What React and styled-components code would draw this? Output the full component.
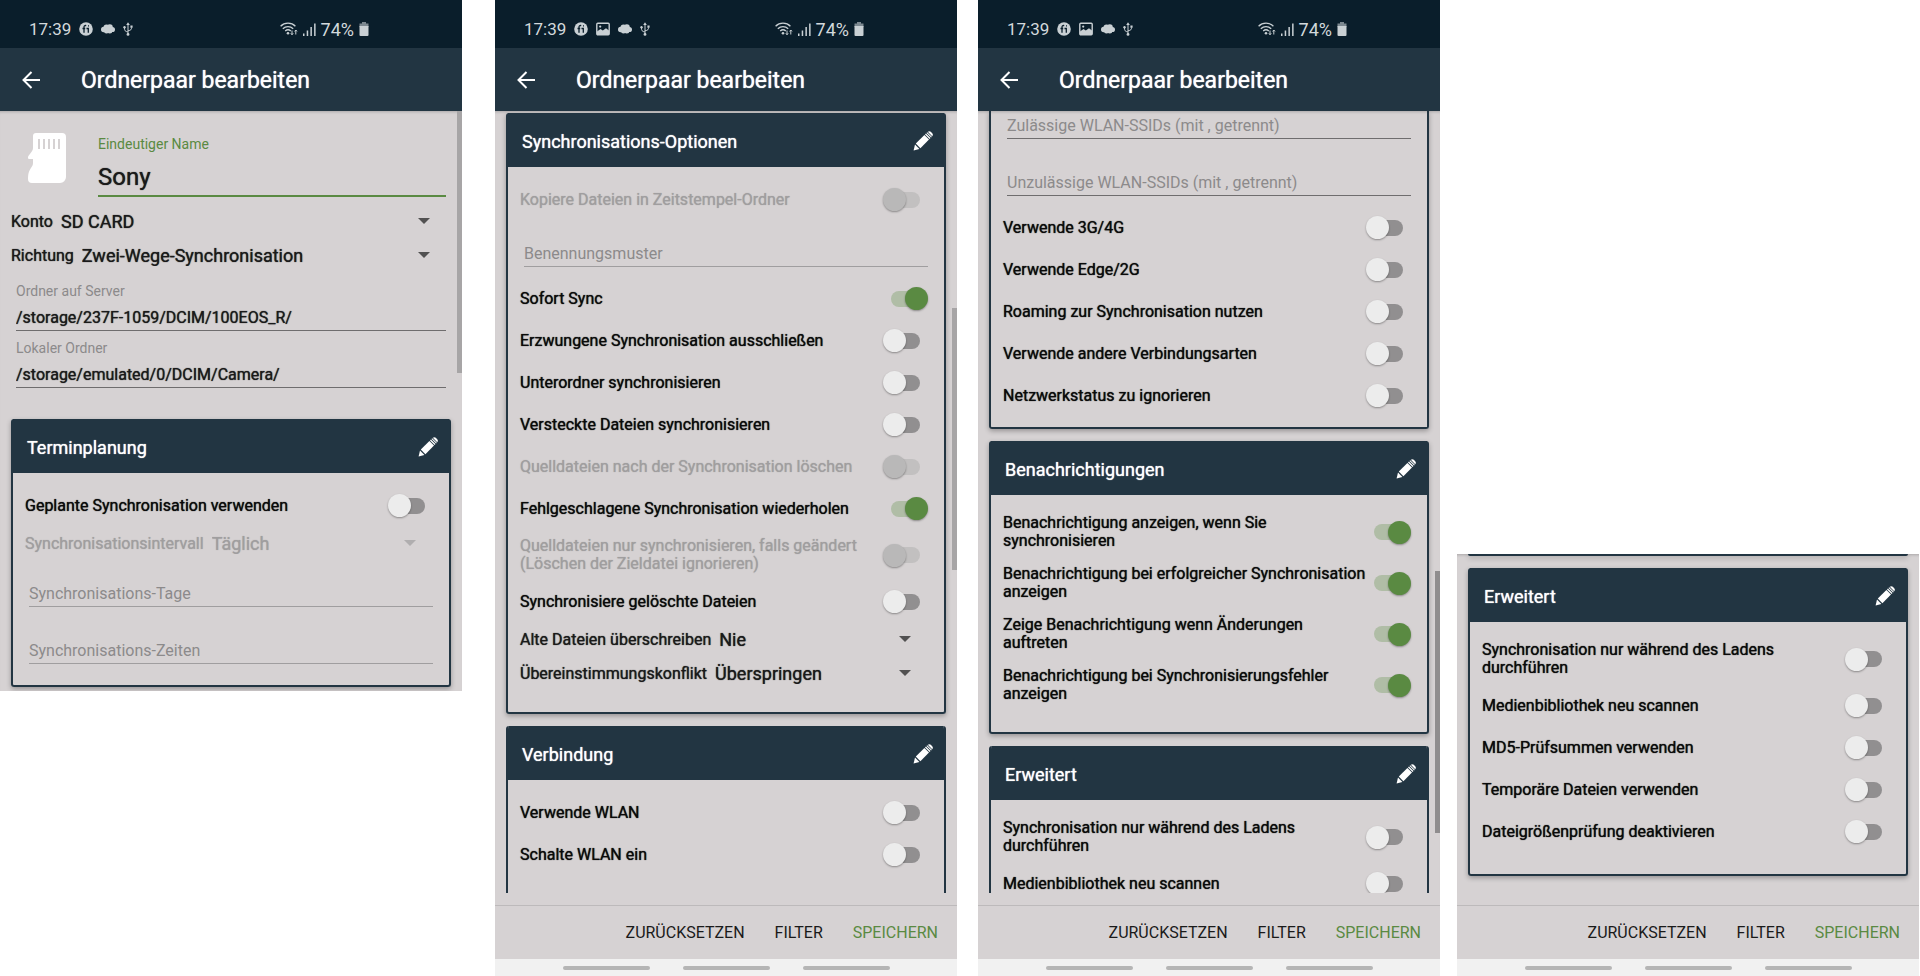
import React, { useId } from 'react';
//Styling
import styled, { createGlobalStyle, css } from 'styled-components';

//Icons
const ArrowIcon = () => (
  <svg width='18' height='18' viewBox='0 0 18 18' fill='none' stroke='#fff' strokeWidth='2'>
    <path d='M18 9H1.5M9.5 1 1.5 9l8 8' />
  </svg>
);

const PencilIcon = () => (
  <svg width='20' height='20' viewBox='0 0 20 20' fill='#fff'>
    <path d='M.6 19.4 2 13.6l4.4 4.4z' />
    <path d='M2.8 12.6 11.4 4 16 8.600 7.400 17.200z' />
    <path d='m12 3.400.9-.9 4.600 4.600-.9.9zM13.500 1.900l.7-.7 4.600 4.600-.7.7z' />
    <path d='M14.800.8c.9-.9 2.100-.9 3 0l1.400 1.400c.9.900.9 2.100 0 3z' />
  </svg>
);

const SdCardIcon = () => (
  <svg width='40' height='50' viewBox='0 0 40 50'>
    <path
      fill='#fff'
      d='M9 0h26a4 4 0 0 1 4 4v40a6 6 0 0 1-6 6H5a4 4 0 0 1-4-4c0-6 1-8 3-11 1-1.500 2-3 2-5v-4H2c-1 0-1-1-1-1.500C1 22 6 19 6 15V3a3 3 0 0 1 3-3z'
    />
    <path stroke='#d6d2d3' strokeWidth='2' d='M12 6v10M17 6v10M22 6v10M27 6v10M32 6v10' />
  </svg>
);

const FiIcon = () => (
  <svg width='14' height='14' viewBox='0 0 14 14'>
    <circle cx='7' cy='7' r='6.800' fill='#c9d0d4' />
    <path
      fill='none'
      stroke='#0a1e2b'
      strokeWidth='1.300'
      d='M5 10.800V5.200c0-1.300.9-2 2.200-1.600M3.500 6.500h2.700M7.500 6.500h1.800v4.300M9 3.800h1'
    />
  </svg>
);

const PictureIcon = () => (
  <svg width='14' height='14' viewBox='0 0 14 14'>
    <rect x='.8' y='1.300' width='12.400' height='11.400' rx='1' fill='none' stroke='#c9d0d4' strokeWidth='1.400' />
    <path fill='#c9d0d4' d='M1 12V9.500L4.500 7l2.300 1.600L10 6.200l3 2.300V12z' />
    <circle cx='4.200' cy='4.600' r='1.100' fill='#c9d0d4' />
  </svg>
);

const CloudIcon = () => (
  <svg width='14' height='14' viewBox='0 0 14 14' fill='#c9d0d4'>
    <circle cx='2.700' cy='7.500' r='2.700' />
    <circle cx='5.500' cy='5.400' r='3' />
    <circle cx='8.800' cy='5.200' r='3' />
    <circle cx='11.400' cy='7.500' r='2.600' />
    <circle cx='5.500' cy='9' r='2.500' />
    <circle cx='8.800' cy='9' r='2.500' />
  </svg>
);

const UsbIcon = () => (
  <svg width='10' height='14' viewBox='0 0 10 14' fill='none' stroke='#c9d0d4'>
    <path d='M5 12V2M5 10C2 9.500 1.500 8.500 1.500 6M5 8.800c3-.5 3.500-1.300 3.500-3.300' />
    <path fill='#c9d0d4' stroke='none' d='M5 .3 6.800 3H3.200zM7.400 3.600h2.200v2.200H7.400z' />
    <circle cx='1.500' cy='5.200' r='1.200' fill='#c9d0d4' stroke='none' />
    <circle cx='5' cy='12.400' r='1.400' fill='#c9d0d4' stroke='none' />
  </svg>
);

const WifiIcon = () => (
  <svg width='18' height='14' viewBox='0 0 18 14' fill='none' stroke='#c9d0d4' strokeWidth='1.300'>
    <path d='M.6 4.200c4-4 10.800-4 14.800 0M2.800 6.700c3-2.900 7.400-2.900 10.400 0M5.200 9c1.700-1.500 3.900-1.500 5.600 0' />
    <circle cx='8' cy='11.200' r='1.300' fill='#c9d0d4' stroke='none' />
    <path strokeWidth='1' d='M12 8.500v4.300M10.800 11.300l1.200 1.400 1.200-1.400M15.800 12.500V8M14.600 9.400l1.200-1.400L17 9.400' />
  </svg>
);

const SignalIcon = () => (
  <svg width='13' height='13' viewBox='0 0 13 13' fill='#c9d0d4'>
    <path d='M0 10.500h1.500V13H0zM3.700 7.500h1.500V13H3.700zM7.400 4h1.500v9H7.400zM11.100.5h1.500V13h-1.500z' />
  </svg>
);

const BatteryIcon = () => (
  <svg width='10' height='14' viewBox='0 0 10 14'>
    <path fill='#7c8890' d='M3 0h4v1.500h2.500V5H.5V1.500H3z' />
    <path fill='#c9d0d4' d='M.5 4h9v9a1 1 0 0 1-1 1h-7a1 1 0 0 1-1-1z' />
  </svg>
);

//Parts
const TopBars = ({ picture }) => (
  <header>
    <StatusBar>
      <StatusGroup>
        <Clock>17:39</Clock>
        <FiIcon />
        {picture && <PictureIcon />}
        <CloudIcon />
        <UsbIcon />
      </StatusGroup>
      <SystemGroup>
        <WifiIcon />
        <SignalIcon />
        <span>74%</span>
        <BatteryIcon />
      </SystemGroup>
    </StatusBar>
    <AppBar>
      <IconButton aria-label='Zurück'>
        <ArrowIcon />
      </IconButton>
      <Title>Ordnerpaar bearbeiten</Title>
    </AppBar>
  </header>
);

const BottomBars = () => (
  <footer>
    <Actions>
      <ActionButton>ZURÜCKSETZEN</ActionButton>
      <ActionButton>FILTER</ActionButton>
      <ActionButton $primary>SPEICHERN</ActionButton>
    </Actions>
    <NavBar>
      <NavHandle />
      <NavHandle />
      <NavHandle />
    </NavBar>
  </footer>
);

const Section = ({ title, roomy, cut, children }) => (
  <Card $cut={cut}>
    <CardHeader>
      <CardTitle>{title}</CardTitle>
      <IconButton aria-label={`${title} bearbeiten`}>
        <PencilIcon />
      </IconButton>
    </CardHeader>
    <CardBody $roomy={roomy}>{children}</CardBody>
  </Card>
);

const Toggle = ({ label, on, disabled }) => (
  <ToggleRow $disabled={disabled}>
    <ToggleText>{label}</ToggleText>
    <Switch type='checkbox' role='switch' defaultChecked={on} disabled={disabled} />
  </ToggleRow>
);

const Choice = ({ label, value, disabled }) => {
  const id = useId();
  return (
    <ChoiceRow $disabled={disabled}>
      <label htmlFor={id}>{label}</label>
      <Select id={id} disabled={disabled}>
        <option>{value}</option>
      </Select>
      <Caret />
    </ChoiceRow>
  );
};

const HintField = ({ label, first, disabled }) => (
  <HintInput placeholder={label} aria-label={label} $first={first} disabled={disabled} />
);

const PathField = ({ label, value }) => (
  <PathLabel>
    {label}
    <PathInput defaultValue={value} />
  </PathLabel>
);

const App = () => {
  return (
    <>
      <GlobalStyle />
      <Gallery>
        <Screen>
          <TopBars />
          <Content>
            <NameRow>
              <SdCardIcon />
              <NameLabel>
                Eindeutiger Name
                <NameInput defaultValue='Sony' />
              </NameLabel>
            </NameRow>
            <Choices>
              <Choice label='Konto' value='SD CARD' />
              <Choice label='Richtung' value='Zwei-Wege-Synchronisation' />
            </Choices>
            <Paths>
              <PathField label='Ordner auf Server' value='/storage/237F-1059/DCIM/100EOS_R/' />
              <PathField label='Lokaler Ordner' value='/storage/emulated/0/DCIM/Camera/' />
            </Paths>
            <Cards $pad='31px 11px 4px'>
              <Section title='Terminplanung'>
                <Toggle label='Geplante Synchronisation verwenden' />
                <Choice label='Synchronisationsintervall' value='Täglich' disabled />
                <HintField label='Synchronisations-Tage' disabled />
                <HintField label='Synchronisations-Zeiten' disabled />
              </Section>
            </Cards>
            <ScrollThumb $top='0' />
          </Content>
        </Screen>

        <Screen $gap='33px' $full>
          <TopBars picture />
          <Content>
            <Cards $pad='2px 11px 0'>
              <Section title='Synchronisations-Optionen' roomy>
                <Toggle label='Kopiere Dateien in Zeitstempel-Ordner' disabled />
                <HintField label='Benennungsmuster' disabled />
                <Toggle label='Sofort Sync' on />
                <Toggle label='Erzwungene Synchronisation ausschließen' />
                <Toggle label='Unterordner synchronisieren' />
                <Toggle label='Versteckte Dateien synchronisieren' />
                <Toggle label='Quelldateien nach der Synchronisation löschen' disabled />
                <Toggle label='Fehlgeschlagene Synchronisation wiederholen' on />
                <Toggle
                  label='Quelldateien nur synchronisieren, falls geändert (Löschen der Zieldatei ignorieren)'
                  disabled
                />
                <Toggle label='Synchronisiere gelöschte Dateien' />
                <Choice label='Alte Dateien überschreiben' value='Nie' />
                <Choice label='Übereinstimmungskonflikt' value='Überspringen' />
              </Section>
              <Section title='Verbindung' cut>
                <Toggle label='Verwende WLAN' />
                <Toggle label='Schalte WLAN ein' />
              </Section>
            </Cards>
            <ScrollThumb $top='197px' />
          </Content>
          <BottomBars />
        </Screen>

        <Screen $gap='21px' $full>
          <TopBars picture />
          <Content>
            <Cards $pad='0 11px'>
              <OpenCard>
                <HintField label='Zulässige WLAN-SSIDs (mit , getrennt)' first />
                <HintField label='Unzulässige WLAN-SSIDs (mit , getrennt)' />
                <Toggle label='Verwende 3G/4G' />
                <Toggle label='Verwende Edge/2G' />
                <Toggle label='Roaming zur Synchronisation nutzen' />
                <Toggle label='Verwende andere Verbindungsarten' />
                <Toggle label='Netzwerkstatus zu ignorieren' />
              </OpenCard>
              <Section title='Benachrichtigungen' roomy>
                <Toggle label='Benachrichtigung anzeigen, wenn Sie synchronisieren' on />
                <Toggle label='Benachrichtigung bei erfolgreicher Synchronisation anzeigen' on />
                <Toggle label='Zeige Benachrichtigung wenn Änderungen auftreten' on />
                <Toggle label='Benachrichtigung bei Synchronisierungsfehler anzeigen' on />
              </Section>
              <Section title='Erweitert' cut>
                <Toggle label='Synchronisation nur während des Ladens durchführen' />
                <Toggle label='Medienbibliothek neu scannen' />
              </Section>
            </Cards>
            <ScrollThumb $top='460px' $dark />
          </Content>
          <BottomBars />
        </Screen>

        <Screen $gap='17px' $bottom>
          <Content>
            <Cards $pad='0 11px 17px'>
              <CardEdge />
              <Section title='Erweitert' roomy>
                <Toggle label='Synchronisation nur während des Ladens durchführen' />
                <Toggle label='Medienbibliothek neu scannen' />
                <Toggle label='MD5-Prüfsummen verwenden' />
                <Toggle label='Temporäre Dateien verwenden' />
                <Toggle label='Dateigrößenprüfung deaktivieren' />
              </Section>
            </Cards>
          </Content>
          <BottomBars />
        </Screen>
      </Gallery>
    </>
  );
};

const GlobalStyle = createGlobalStyle`
  * {
    box-sizing: border-box;
  }
  body {
    margin: 0;
    background: white;
    font-family: Roboto, sans-serif;
    font-size: 16px;
    color: #111;
  }
  button, input, select {
    margin: 0;
    padding: 0;
    border: none;
    border-radius: 0;
    background: none;
    font: inherit;
    color: inherit;
  }
  svg {
    display: block;
    flex: none;
  }
`;

//A touch heavier than regular, keeps the regular widths
const heavier = css`
  text-shadow: 0 0 1px currentColor;
`;

const Gallery = styled.main`
  display: flex;
  align-items: flex-start;
  min-height: 100vh;
  padding-right: 1px;
`;

const Screen = styled.section`
  flex: 1;
  min-width: 0;
  display: flex;
  flex-direction: column;
  margin-left: ${({ $gap }) => $gap || 0};
  background: #d6d2d3;
  ${({ $full }) => $full && 'height: 100vh;'}
  ${({ $bottom }) => $bottom && 'align-self: flex-end;'}
`;

const StatusBar = styled.div`
  display: flex;
  align-items: center;
  justify-content: space-between;
  height: 48px;
  padding: 10px 93px 0 29px;
  background: #0a1e2b;
  color: #d3d9dc;
  font-size: 18px;
`;

const StatusGroup = styled.div`
  display: flex;
  align-items: center;
  gap: 8px;
`;

const SystemGroup = styled(StatusGroup)`
  gap: 5px;
`;

const Clock = styled.time`
  font-size: 17px;
`;

const AppBar = styled.div`
  display: flex;
  align-items: center;
  gap: 41px;
  height: 63px;
  padding-left: 22px;
  background: #223542;
  color: white;
`;

const IconButton = styled.button`
  display: flex;
  cursor: pointer;
`;

const Title = styled.h1`
  margin: 0;
  padding-top: 2px;
  font-size: 23px;
  font-weight: 400;
  ${heavier}
`;

const Content = styled.div`
  position: relative;
  flex: 1;
  min-height: 0;
  display: flex;
  flex-direction: column;
  overflow: hidden;
  box-shadow: inset 0 3px 3px -2px rgba(0, 0, 0, 0.2);
`;

const ScrollThumb = styled.div`
  position: absolute;
  top: ${({ $top }) => $top};
  right: 0;
  width: 5px;
  height: 262px;
  background: ${({ $dark }) => ($dark ? '#8f8d8e' : '#a7a5a6')};
`;

const NameRow = styled.div`
  display: flex;
  gap: 31px;
  padding: 22px 16px 0 27px;
`;

const NameLabel = styled.label`
  flex: 1;
  font-size: 14px;
  line-height: 22px;
  color: #5a8a42;
`;

const NameInput = styled.input`
  display: block;
  width: 100%;
  height: 42px;
  padding-top: 4px;
  border-bottom: 2px solid #5a8a42;
  font-size: 24px;
  color: #1a1a1a;
  ${heavier}
`;

const Choices = styled.div`
  padding: 7px 15px 2px 11px;
`;

const Paths = styled.div`
  padding: 0 16px;
`;

const PathLabel = styled.label`
  display: block;
  padding-top: 8px;
  font-size: 14px;
  line-height: 18px;
  color: #8c8a8b;
`;

const PathInput = styled.input`
  display: block;
  width: 100%;
  height: 31px;
  padding-top: 4px;
  border-bottom: 1px solid #6f6d6e;
  font-size: 16px;
  color: #1a1a1a;
  ${heavier}
`;

const Cards = styled.div`
  flex: 1;
  display: flex;
  flex-direction: column;
  gap: 12px;
  padding: ${({ $pad }) => $pad};
`;

const Card = styled.section`
  flex: ${({ $cut }) => ($cut ? '1 1 0' : 'none')};
  min-height: 0;
  display: flex;
  flex-direction: column;
  border: 2px solid #223542;
  border-top: none;
  border-radius: 3px;
  box-shadow: 0 2px 5px rgba(0, 0, 0, 0.3);
  ${({ $cut }) =>
    $cut &&
    css`
      overflow: hidden;
      border-bottom: none;
      border-radius: 3px 3px 0 0;
      box-shadow: none;
    `}
`;

const CardHeader = styled.header`
  flex: none;
  display: flex;
  align-items: center;
  justify-content: space-between;
  height: 54px;
  padding: 2px 11px 0 14px;
  background: #223542;
  color: white;
`;

const CardTitle = styled.h2`
  margin: 0;
  font-size: 18px;
  font-weight: 400;
  ${heavier}
`;

const CardBody = styled.div`
  display: flex;
  flex-direction: column;
  padding: 11px 16px ${({ $roomy }) => ($roomy ? '22px' : '11px')} 12px;
`;

const OpenCard = styled.section`
  flex: none;
  display: flex;
  flex-direction: column;
  padding: 0 16px 11px 12px;
  border: 2px solid #223542;
  border-top: none;
  border-radius: 0 0 3px 3px;
  box-shadow: 0 2px 5px rgba(0, 0, 0, 0.3);
`;

const CardEdge = styled.div`
  height: 2px;
  background: #223542;
  border-radius: 0 0 3px 3px;
  box-shadow: 0 2px 5px rgba(0, 0, 0, 0.3);
`;

const ToggleRow = styled.label`
  display: flex;
  align-items: center;
  min-height: 42px;
  padding: 8px 0 7px;
  color: ${({ $disabled }) => ($disabled ? '#a09e9f' : '#0a0a0a')};
`;

const ToggleText = styled.span`
  flex: 1;
  line-height: 18px;
  ${heavier}
`;

const Switch = styled.input`
  appearance: none;
  flex: none;
  display: grid;
  align-items: center;
  width: 45px;
  height: 23px;
  &::before,
  &::after {
    content: '';
    grid-area: 1 / 1;
  }
  &::before {
    justify-self: center;
    width: 29px;
    height: 16px;
    border-radius: 8px;
    background: #918f90;
  }
  &::after {
    justify-self: start;
    width: 23px;
    height: 23px;
    border-radius: 50%;
    background: #ececec;
    box-shadow: 0 1px 2px rgba(0, 0, 0, 0.35);
  }
  &:checked::before {
    background: #b0bda6;
  }
  &:checked::after {
    justify-self: end;
    background: #5a8a42;
  }
  &:disabled::before {
    background: #c2c0c0;
  }
  &:disabled::after {
    background: #b9b8b8;
  }
`;

const ChoiceRow = styled.div`
  display: flex;
  align-items: center;
  height: 34px;
  padding-right: 17px;
  color: ${({ $disabled }) => ($disabled ? '#a09e9f' : '#1a1a1a')};
  ${heavier}
`;

const Select = styled.select`
  appearance: none;
  flex: 1;
  min-width: 0;
  padding-left: 8px;
  font-size: 18px;
  opacity: 1;
  ${heavier}
`;

const Caret = styled.span`
  border: 6px solid transparent;
  border-top-color: currentColor;
  border-bottom: none;
  opacity: 0.7;
`;

const HintInput = styled.input`
  display: block;
  width: calc(100% - 4px);
  height: 28px;
  margin: ${({ $first }) => ($first ? '0' : '19px')} 0 10px 4px;
  padding-top: 2px;
  border-bottom: 1px solid ${({ disabled }) => (disabled ? '#a09e9f' : '#6f6d6e')};
  &::placeholder {
    color: #8c8a8b;
    opacity: 1;
  }
`;

const Actions = styled.div`
  display: flex;
  align-items: center;
  justify-content: flex-end;
  gap: 30px;
  height: 54px;
  margin-top: 12px;
  padding-right: 19px;
  border-top: 1px solid #bdbabb;
`;

const ActionButton = styled.button`
  font-size: 16px;
  color: ${({ $primary }) => ($primary ? '#5a8a42' : '#1a1a1a')};
  cursor: pointer;
`;

const NavBar = styled.div`
  display: flex;
  align-items: center;
  justify-content: center;
  gap: 33px;
  height: 17px;
  background: #f1f1f1;
`;

const NavHandle = styled.span`
  width: 87px;
  height: 4px;
  border-radius: 2px;
  background: #b5b5b5;
`;

export default App;
